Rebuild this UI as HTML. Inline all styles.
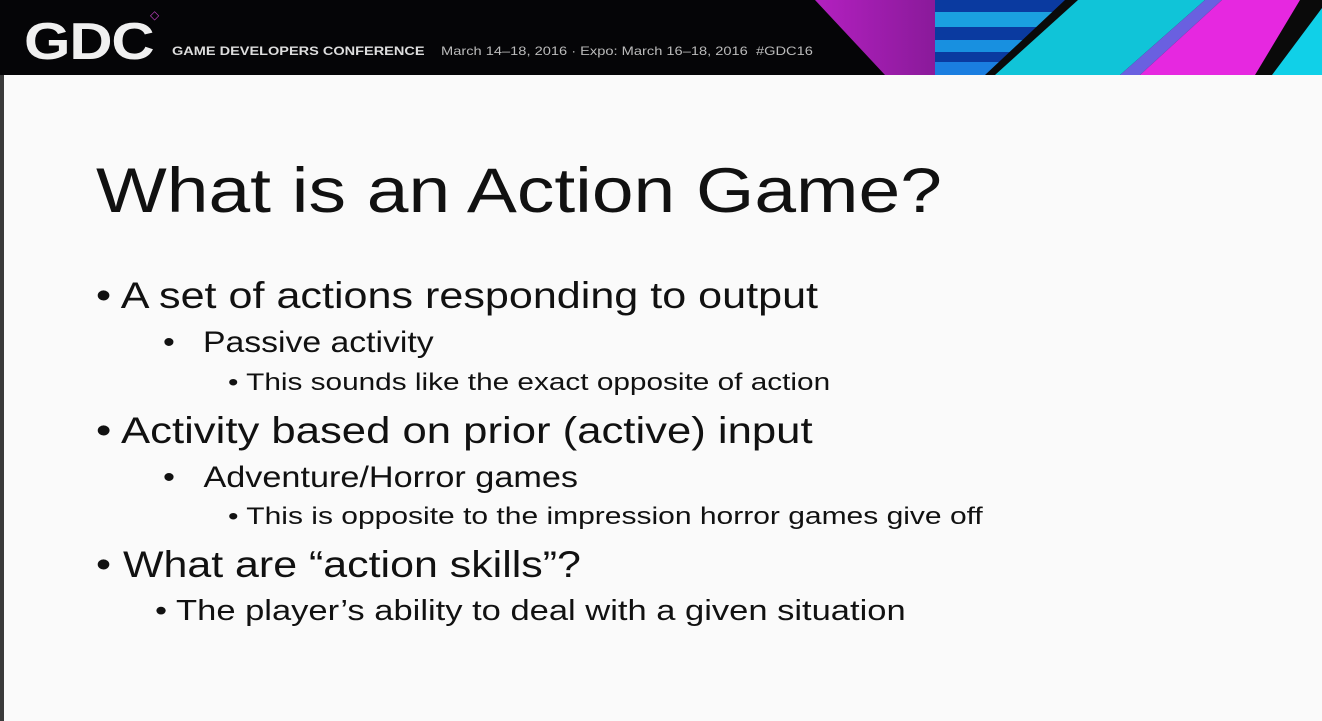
<!DOCTYPE html>
<html><head><style>
body{margin:0;width:1322px;height:721px;overflow:hidden;background:#fafafa;font-family:"Liberation Sans",sans-serif;position:relative}
.hdr{position:absolute;left:0;top:0;width:1322px;height:75px;background:#050507;overflow:hidden}
.t{position:absolute;white-space:nowrap;color:#111;transform-origin:0 0}
</style></head><body>
<div style="position:absolute;left:0;top:0;width:4px;height:721px;background:#3a3a3a"></div>
<div class="hdr">
<svg width="1322" height="75" style="position:absolute;left:0;top:0">
<defs><linearGradient id="p" x1="0" x2="1"><stop offset="0" stop-color="#b320c0"/><stop offset="1" stop-color="#8a1a9a"/></linearGradient></defs>
<polygon points="815,0 935,0 935,75 885,75" fill="url(#p)"/>
<rect x="935" y="0" width="150" height="75" fill="#0a3aa0"/>
<rect x="935" y="12" width="150" height="15" fill="#1aa0e0"/>
<rect x="935" y="40" width="150" height="12" fill="#1890e0"/>
<rect x="935" y="62" width="150" height="13" fill="#1a7ee0"/>
<polygon points="1065,0 1322,0 1322,75 985,75" fill="#0a0a0a"/>
<polygon points="1078,0 1205,0 1120,75 995,75" fill="#10c4d8"/>
<polygon points="1205,0 1222,0 1140,75 1120,75" fill="#6a60e0"/>
<polygon points="1222,0 1300,0 1255,75 1140,75" fill="#e628e0"/>
<polygon points="1322,8 1322,75 1272,75" fill="#10d0e8"/>
</svg>
<div class="t" style="left:24px;top:12px;font-size:52px;font-weight:bold;color:#f0f0f0;letter-spacing:-1px;transform:scaleX(1.15)">GDC</div>
<div class="t" style="left:150px;top:8px;font-size:12px;color:#c040c0">◇</div>
<div class="t" style="left:172px;top:44px;font-size:12px;font-weight:bold;color:#ddd;transform:scaleX(1.21)">GAME DEVELOPERS CONFERENCE</div>
<div class="t" style="left:441px;top:44px;font-size:12px;color:#bbb;transform:scaleX(1.22)">March 14–18, 2016 · Expo: March 16–18, 2016 &nbsp;#GDC16</div>
</div>
<div class="t" style="left:96px;top:155px;font-size:63px;transform:scaleX(1.19)">What is an Action Game?</div>
<div class="t" style="left:96px;top:275px;font-size:37px;transform:scaleX(1.165)">• A set of actions responding to output</div>
<div class="t" style="left:163px;top:326px;font-size:30px;transform:scaleX(1.125)">•&nbsp;&nbsp;&nbsp;Passive activity</div>
<div class="t" style="left:228px;top:369px;font-size:24px;transform:scaleX(1.24)">• This sounds like the exact opposite of action</div>
<div class="t" style="left:96px;top:410px;font-size:37px;transform:scaleX(1.18)">• Activity based on prior (active) input</div>
<div class="t" style="left:163px;top:461px;font-size:30px;transform:scaleX(1.14)">•&nbsp;&nbsp;&nbsp;Adventure/Horror games</div>
<div class="t" style="left:228px;top:503px;font-size:24px;transform:scaleX(1.25)">• This is opposite to the impression horror games give off</div>
<div class="t" style="left:96px;top:544px;font-size:37px;transform:scaleX(1.16)">• What are “action skills”?</div>
<div class="t" style="left:155px;top:595px;font-size:29px;transform:scaleX(1.19)">• The player’s ability to deal with a given situation</div>
</body></html>
